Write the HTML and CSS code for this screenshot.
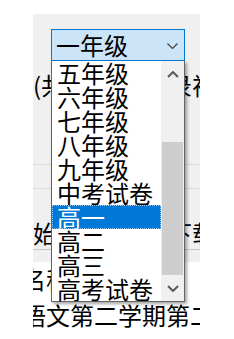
FILE: index.html
```html
<!DOCTYPE html>
<html lang="zh">
<head>
<meta charset="utf-8">
<link rel="stylesheet" href="styles.css">
</head>
<body>
<div class="panel">
  <div class="combo">
    <span class="combo-text">一年级</span>
    <svg class="combo-chev" width="11" height="6" viewBox="0 0 11 6"><polyline points="0.5,0.5 5.5,5.5 10.5,0.5" fill="none" stroke="#444" stroke-width="1.2"/></svg>
  </div>
  <div class="row row-count"><span>(共14条</span><span class="right">录视</span></div>
  <div class="hline l1"></div>
  <div class="hline l2"></div>
  <div class="row row-head"><span>始</span><span class="right">下载</span></div>
  <div class="row row-name"><span class="shift">名称</span></div>
  <div class="row row-title"><span class="shift">语文第二学期第二单元</span></div>

  <div class="dropdown">
    <ul class="items">
      <li>五年级</li>
      <li>六年级</li>
      <li>七年级</li>
      <li>八年级</li>
      <li>九年级</li>
      <li>中考试卷</li>
      <li class="selected">高一</li>
      <li>高二</li>
      <li>高三</li>
      <li>高考试卷</li>
    </ul>
    <div class="scrollbar">
      <div class="sbtn">
        <svg width="12" height="7" viewBox="0 0 12 7"><polyline points="1,6 6,1 11,6" fill="none" stroke="#5a5a5a" stroke-width="2"/></svg>
      </div>
      <div class="track"></div>
      <div class="thumb"></div>
      <div class="sbtn">
        <svg width="12" height="7" viewBox="0 0 12 7"><polyline points="1,1 6,6 11,1" fill="none" stroke="#5a5a5a" stroke-width="2"/></svg>
      </div>
    </div>
  </div>
</div>
</body>
</html>
```
FILE: styles.css
```css
html, body {
  margin: 0;
  padding: 0;
  background: #ffffff;
}
body {
  font-family: "Noto Sans CJK SC", "Noto Sans", sans-serif;
  font-size: 24px;
  line-height: 24px;
  color: #000;
}
.panel {
  position: relative;
  margin: 14px 0 0 33px;
  width: 167px;
  height: 325px;
  overflow: hidden;
  background: linear-gradient(#f0f0f0 0, #f0f0f0 248px, #ffffff 248px);
}
.combo {
  margin: 15px 0 0 18px;
  width: 134px;
  height: 32px;
  box-sizing: border-box;
  border: 1px solid #0078d7;
  background: #cce4f7;
  display: flex;
  align-items: center;
  justify-content: space-between;
  padding: 0 6px 0 4px;
}
.combo-chev { display: block; margin-top: 1px; }
.row {
  display: flex;
  height: 24px;
  white-space: nowrap;
}
.row .right {
  margin-left: auto;
  margin-right: -16px;
}
.row-count { margin-top: 12px; }
.hline { border-top: 1px solid #dadada; }
.l1 { margin-top: 67px; height: 23px; }
.l2 { height: 27px; }
.row-head {
  height: 33px;
  align-items: center;
  border-bottom: 1px solid #c8c8c8;
}
.row-name { margin-top: 17px; }
.row-title { margin-top: 12px; }
.shift { margin-left: -11px; }

.dropdown {
  position: absolute;
  left: 18px;
  top: 47px;
  width: 134px;
  height: 241px;
  box-sizing: border-box;
  border: 1px solid #646464;
  border-top: none;
  background: #ffffff;
  display: flex;
  box-shadow: 2px 2px 3px rgba(0, 0, 0, 0.35);
}
.items {
  list-style: none;
  margin: 0;
  padding: 0;
  flex: 1;
}
.items li {
  height: 24px;
  padding-left: 5px;
}
.items li.selected {
  background: #0078d7;
  color: #ffffff;
  outline: 1px dotted #9ccaf0;
  outline-offset: -1px;
}
.scrollbar {
  width: 23px;
  background: #f0f0f0;
  display: flex;
  flex-direction: column;
}
.sbtn {
  height: 26px;
  display: flex;
  align-items: center;
  justify-content: center;
}
.track { flex: 1; }
.thumb {
  height: 133px;
  margin: 0 1px;
  background: #cdcdcd;
}
```
